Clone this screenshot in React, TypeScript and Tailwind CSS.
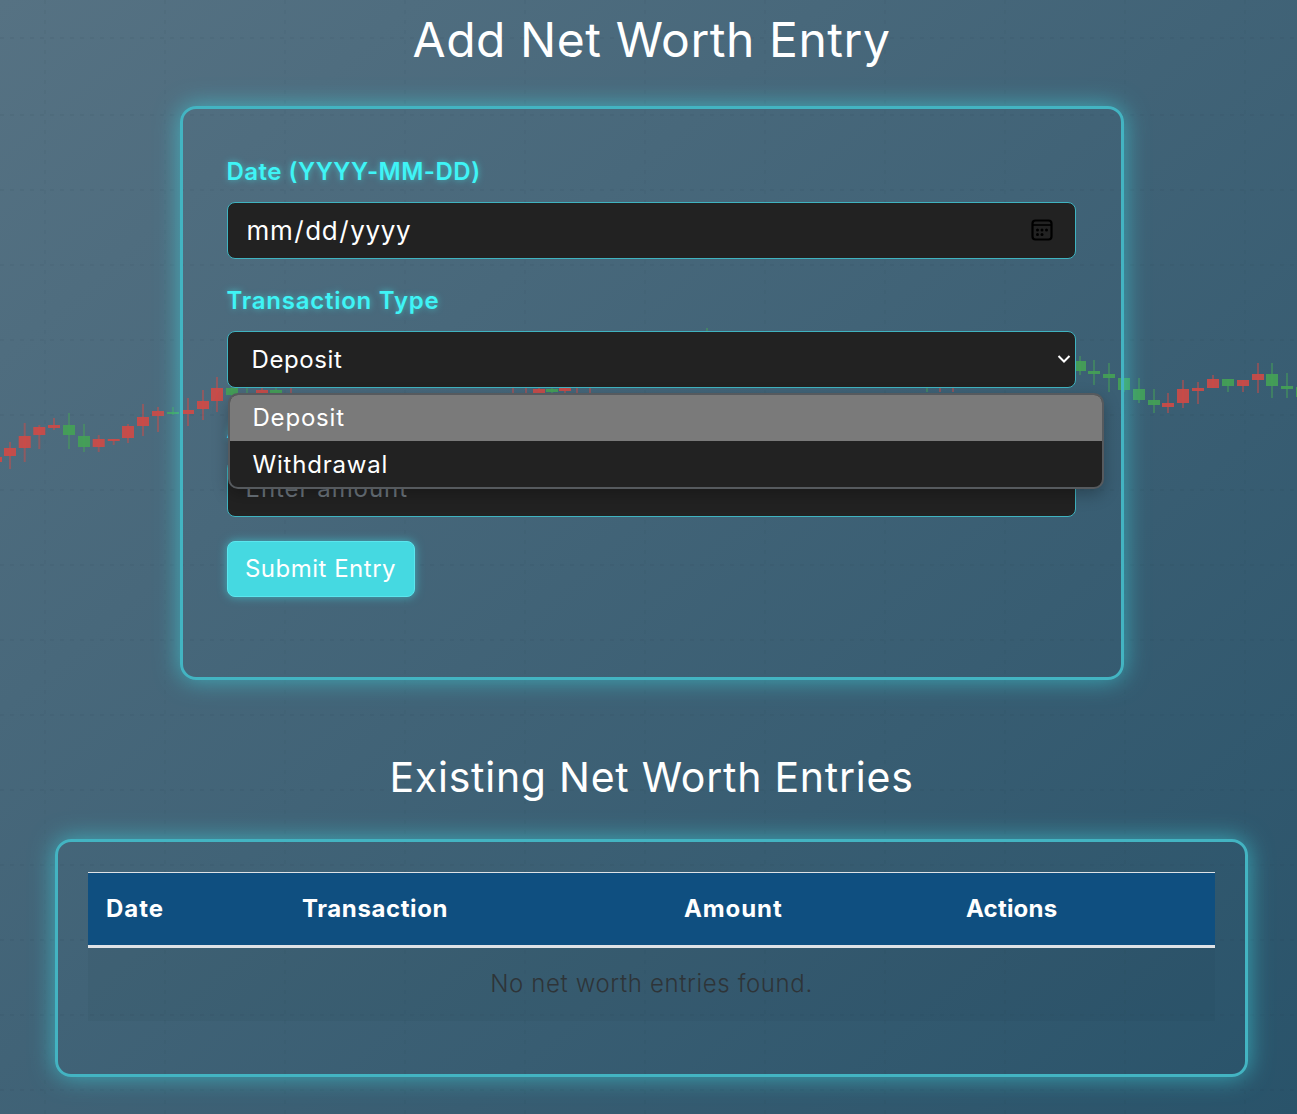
const candles = [
  // left of the form
  { x: -4, o: 457, c: 462, h: 450, l: 470, up: false },
  { x: 10, o: 448, c: 456, h: 442, l: 469, up: false },
  { x: 24.7, o: 436, c: 448, h: 423, l: 462, up: false },
  { x: 39.3, o: 427, c: 435, h: 425, l: 449, up: false },
  { x: 54, o: 425, c: 428, h: 418, l: 430, up: false },
  { x: 69, o: 425, c: 435, h: 413, l: 449, up: true },
  { x: 84, o: 436, c: 447, h: 424, l: 452, up: true },
  { x: 98.7, o: 439, c: 447, h: 435, l: 452, up: false },
  { x: 113.7, o: 439, c: 441, h: 439, l: 445, up: false },
  { x: 128, o: 426, c: 438, h: 424, l: 443, up: false },
  { x: 143, o: 417, c: 426, h: 404, l: 436, up: false },
  { x: 158, o: 411, c: 416, h: 407, l: 432, up: false },
  { x: 173, o: 412, c: 414, h: 407, l: 415, up: true },
  { x: 188, o: 410, c: 414, h: 398, l: 426, up: false },
  { x: 203, o: 401, c: 409, h: 390, l: 420, up: false },
  { x: 217, o: 388, c: 401, h: 377, l: 412, up: false },
  { x: 232, o: 388, c: 395, h: 380, l: 400, up: true },
  // peeking out between the select and the dropdown
  { x: 247, o: 384, c: 386, h: 380, l: 396, up: true },
  { x: 262, o: 390, c: 396, h: 380, l: 400, up: false },
  { x: 276, o: 390, c: 396, h: 380, l: 400, up: true },
  { x: 291, o: 384, c: 386, h: 376, l: 396, up: false },
  { x: 513, o: 380, c: 384, h: 376, l: 396, up: false },
  { x: 526, o: 380, c: 384, h: 376, l: 396, up: false },
  { x: 539, o: 389, c: 394, h: 384, l: 396, up: false },
  { x: 552, o: 389, c: 392, h: 384, l: 396, up: true },
  { x: 565, o: 387, c: 391, h: 380, l: 396, up: false },
  { x: 577, o: 380, c: 384, h: 376, l: 396, up: false },
  { x: 590, o: 380, c: 384, h: 376, l: 396, up: false },
  { x: 707, o: 340, c: 350, h: 328, l: 360, up: true },
  { x: 927, o: 380, c: 384, h: 376, l: 392, up: true },
  { x: 940, o: 380, c: 384, h: 376, l: 392, up: false },
  { x: 953, o: 380, c: 384, h: 376, l: 392, up: false },
  // right of the form
  { x: 1080, o: 361, c: 371, h: 356, l: 375, up: true },
  { x: 1094, o: 371, c: 374, h: 360, l: 385, up: true },
  { x: 1109, o: 374, c: 378, h: 363, l: 392, up: true },
  { x: 1124, o: 378, c: 390, h: 378, l: 392, up: true },
  { x: 1139, o: 389, c: 400, h: 378, l: 403, up: true },
  { x: 1154, o: 400, c: 405, h: 389, l: 413, up: true },
  { x: 1168, o: 403, c: 407, h: 393, l: 413, up: false },
  { x: 1183, o: 389, c: 403, h: 380, l: 408, up: false },
  { x: 1198, o: 388, c: 391, h: 382, l: 404, up: false },
  { x: 1213, o: 379, c: 388, h: 375, l: 388, up: false },
  { x: 1228, o: 379, c: 386, h: 379, l: 392, up: true },
  { x: 1243, o: 380, c: 386, h: 380, l: 392, up: false },
  { x: 1258, o: 374, c: 380, h: 363, l: 393, up: false },
  { x: 1272, o: 374, c: 386, h: 363, l: 398, up: true },
  { x: 1287, o: 386, c: 389, h: 373, l: 398, up: true },
  { x: 1302, o: 387, c: 397, h: 375, l: 400, up: true },
];

const gridRows = [38, 115, 190, 265, 340, 415, 490, 565, 640, 715, 790, 865, 940, 1015, 1090];
const gridCols = [45, 165, 285, 405, 525, 645, 765, 885, 1005, 1125, 1245];

function ChartBackdrop() {
  return (
    <svg className="absolute inset-0 blur-[0.7px]" width="1297" height="1114" viewBox="0 0 1297 1114">
      {gridRows.map((y) => (
        <line key={y} x1="0" x2="1297" y1={y} y2={y} stroke="#1f3340" strokeOpacity="0.13" strokeDasharray="4 6" />
      ))}
      {gridCols.map((x) => (
        <line key={x} x1={x} x2={x} y1="0" y2="1114" stroke="#1f3340" strokeOpacity="0.08" strokeDasharray="4 6" />
      ))}
      {candles.map((k) => {
        const color = k.up ? '#45a255' : '#d04a46';
        return (
          <g key={k.x} fill={color}>
            <rect x={k.x - 1} y={k.h} width="2" height={k.l - k.h} opacity="0.5" />
            <rect x={k.x - 6} y={k.o} width="12" height={k.c - k.o} opacity="0.9" />
          </g>
        );
      })}
    </svg>
  );
}

const labelClass =
  "block h-9 mb-[13px] text-[24px] leading-[38px] font-semibold text-[#3ff4f6] [text-shadow:0_0_6px_rgba(64,240,240,0.55)]";
const fieldClass =
  "block w-full h-[57px] rounded-lg border border-[#3fb3c0] bg-[#222222] text-white";

export default function App() {
  return (
    <div className="relative h-[1114px] w-[1297px] overflow-hidden bg-gradient-to-br from-[#567283] to-[#29536a] font-['Inter','Liberation_Sans',sans-serif]">
      <ChartBackdrop />

      <main className="relative flex flex-col items-center pl-[6px] pt-[11px]">
        <h1 className="h-[58px] text-[48px] leading-[58px] text-white tracking-[0.55px] mb-[37px]">Add Net Worth Entry</h1>

        <form className="w-[944px] h-[574px] rounded-2xl border-[3px] border-[#43b4c2] pt-[44px] pl-[44px] pr-[45px] shadow-[0_0_24px_rgba(64,224,232,0.6)]">
          <label className={`${labelClass} tracking-[0.5px]`}>Date (YYYY-MM-DD)</label>
          <div className="relative mb-[23px]">
            <input
              type="date"
              className={`${fieldClass} pl-[18px] pr-5 text-[26px] tracking-[0.6px] [&::-webkit-calendar-picker-indicator]:opacity-0`}
            />
            <svg className="absolute right-[23px] top-[17px] pointer-events-none" width="22" height="22" viewBox="0 0 22 22" fill="none">
              <rect x="1.5" y="1.5" width="19" height="19" rx="3" stroke="#000000" strokeWidth="2.2" />
              <path d="M2 6h18" stroke="#000000" strokeWidth="1.6" />
              <g fill="#000000">
                <circle cx="6.5" cy="11" r="1.5" />
                <circle cx="11" cy="11" r="1.5" />
                <circle cx="15.5" cy="11" r="1.5" />
                <circle cx="6.5" cy="15.5" r="1.5" />
                <circle cx="11" cy="15.5" r="1.5" />
              </g>
            </svg>
          </div>

          <label className={`${labelClass} tracking-[0.75px]`}>Transaction Type</label>
          <div className="relative mb-[23px] z-10">
            <select className={`${fieldClass} appearance-none pl-6 pr-8 text-[24px] tracking-[0.6px]`} defaultValue="Deposit">
              <option>Deposit</option>
              <option>Withdrawal</option>
            </select>
            <svg className="absolute right-[5px] top-[23px] pointer-events-none" width="14" height="10" viewBox="0 0 14 10" fill="none">
              <path d="M1.5 2l5.5 5.5L12.5 2" stroke="#ffffff" strokeWidth="2" />
            </svg>
            {/* the open option list */}
            <div className="absolute left-[1px] top-[62px] w-[876px] h-[96px] overflow-hidden rounded-[10px] border-2 border-[#565a5e] bg-[#222222] text-[24px] leading-[46px] text-white tracking-[0.8px] shadow-[0_6px_16px_rgba(0,0,0,0.25)]">
              <div className="h-[46px] bg-[#7a7a7a] pl-[23px]">Deposit</div>
              <div className="h-[48px] leading-[47px] pl-[23px]">Withdrawal</div>
            </div>
          </div>

          <label className={labelClass}>Amount</label>
          <input
            type="text"
            placeholder="Enter amount"
            className={`${fieldClass} pl-[18px] mb-6 text-[24px] tracking-[0.95px] placeholder:text-[#6c757d]`}
          />

          <button type="button" className="h-14 w-[188px] rounded-lg border border-[#5be6ee] bg-[#45d9e1] text-[24px] tracking-[0.5px] text-white shadow-[0_0_10px_rgba(64,224,232,0.6)]">
            Submit Entry
          </button>
        </form>

        <h2 className="mt-[68px] h-[58px] text-[41px] leading-[58px] text-white tracking-[0.75px] mb-[33px]">Existing Net Worth Entries</h2>

        <section className="w-[1193px] h-[238px] rounded-2xl border-[3px] border-[#43b4c2] p-[30px] shadow-[0_0_24px_rgba(64,224,232,0.6)]">
          <table className="w-[1127px] table-fixed border-collapse text-[24px]">
            <thead>
              <tr className="h-[74px] bg-[#0f4f80] border-t border-b-[3px] border-[#dee2e6] text-left text-white">
                <th className="w-[196px] pl-[18px] font-bold tracking-[1px]">Date</th>
                <th className="w-[382px] pl-[18px] font-bold tracking-[0.6px]">Transaction</th>
                <th className="w-[282px] pl-[18px] font-bold tracking-[0.9px]">Amount</th>
                <th className="w-[267px] pl-[18px] font-bold tracking-[0.2px]">Actions</th>
              </tr>
            </thead>
            <tbody>
              <tr className="h-[74px] bg-[rgba(30,50,65,0.07)]">
                <td colSpan={4} className="text-center text-[#2e3438] font-light tracking-[0.63px]">No net worth entries found.</td>
              </tr>
            </tbody>
          </table>
        </section>
      </main>
    </div>
  );
}
